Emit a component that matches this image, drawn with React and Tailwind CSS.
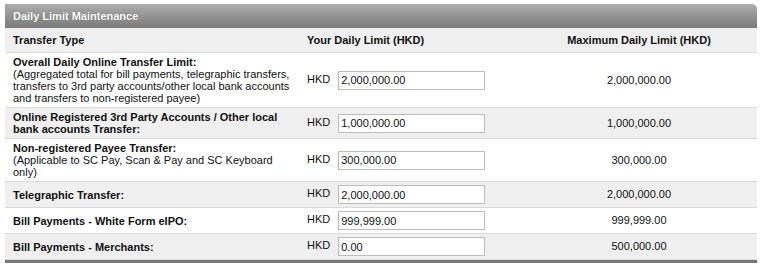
import React from 'react';

const rows = [
  {
    title: 'Overall Daily Online Transfer Limit:',
    note: '(Aggregated total for bill payments, telegraphic transfers, transfers to 3rd party accounts/other local bank accounts and transfers to non-registered payee)',
    value: '2,000,000.00',
    max: '2,000,000.00',
  },
  {
    title: 'Online Registered 3rd Party Accounts / Other local bank accounts Transfer:',
    value: '1,000,000.00',
    max: '1,000,000.00',
  },
  {
    title: 'Non-registered Payee Transfer:',
    note: '(Applicable to SC Pay, Scan & Pay and SC Keyboard only)',
    value: '300,000.00',
    max: '300,000.00',
  },
  { title: 'Telegraphic Transfer:', value: '2,000,000.00', max: '2,000,000.00' },
  { title: 'Bill Payments - White Form eIPO:', value: '999,999.00', max: '999,999.00' },
  { title: 'Bill Payments - Merchants:', value: '0.00', max: '500,000.00' },
];

const App = () => {
  return (
    <div className="bg-white w-[764px] h-[268px] pt-[4px] pl-[5px] font-['Liberation_Sans',Arial,sans-serif] text-[11px] text-[#111]">
      <div className="w-[752px]">
        {/* Title bar */}
        <div className="h-[24px] flex items-center pl-[8px] rounded-tr-[5px] bg-linear-to-b from-[#adadad] to-[#7a7a7a] text-white font-bold [text-shadow:0_0_1px_rgba(0,0,0,0.35)]">
          Daily Limit Maintenance
        </div>

        {/* Column headings */}
        <div className="grid grid-cols-[295px_221px_1fr] h-[25px] items-center bg-[#efefef] border-b border-[#dadada] font-bold">
          <div className="pl-[8px]">Transfer Type</div>
          <div className="pl-[7px]">Your Daily Limit (HKD)</div>
          <div className="text-center">Maximum Daily Limit (HKD)</div>
        </div>

        {/* Limit rows */}
        {rows.map((row, i) => (
          <div
            key={row.title}
            className={`grid grid-cols-[295px_221px_1fr] items-center border-b border-[#dadada] ${
              i % 2 === 1 ? 'bg-[#efefef]' : 'bg-white'
            }`}
          >
            <div className="pl-[8px] pr-[6px] py-[3px] leading-[12px]">
              <div className="font-bold">{row.title}</div>
              {row.note && <div>{row.note}</div>}
            </div>
            <div className="pl-[7px] py-[3px] flex items-center gap-[8px]">
              <span className="leading-[12px] -mt-[3px]">HKD</span>
              <input
                type="text"
                defaultValue={row.value}
                className="w-[147px] h-[19px] border border-[#bcbcbc] bg-white px-[2px] text-[11px] text-[#111] outline-none"
              />
            </div>
            <div className="text-center">{row.max}</div>
          </div>
        ))}

        <div className="h-[3px] bg-[#777]" />
      </div>
    </div>
  );
};

export default App;
